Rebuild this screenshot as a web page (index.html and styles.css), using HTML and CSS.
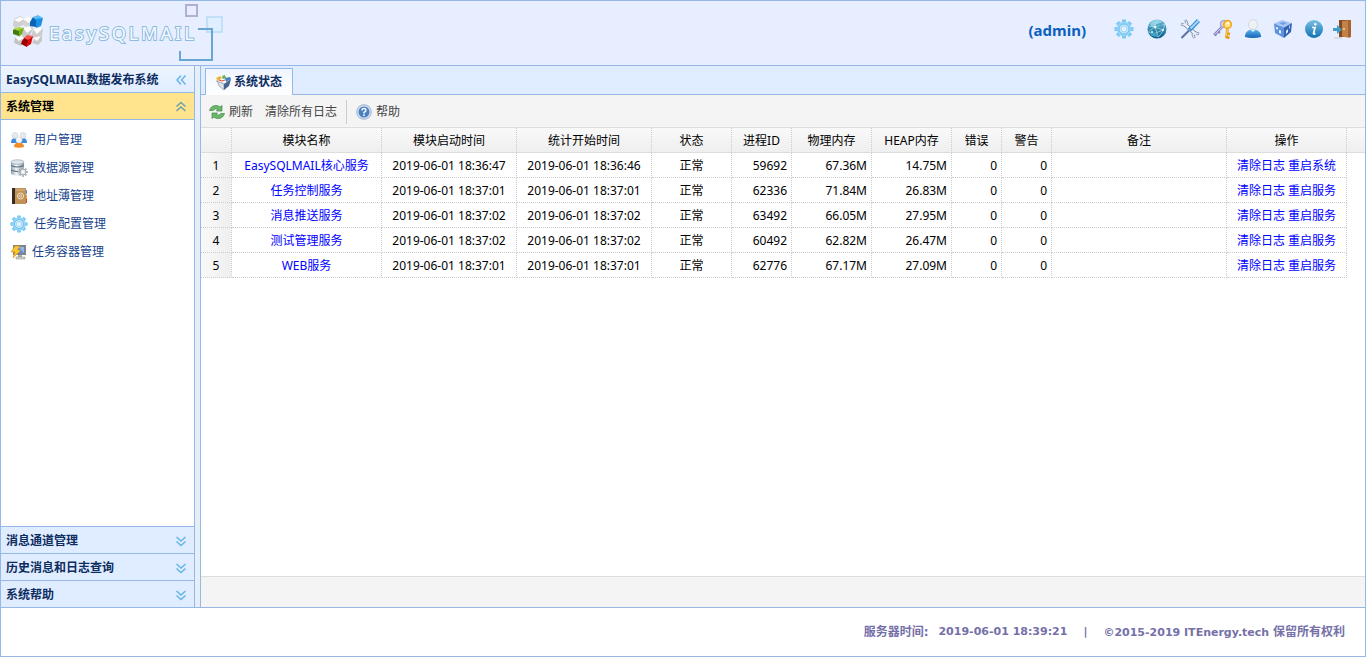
FILE: index.html
```html
<!DOCTYPE html>
<html lang="zh-CN">
<head>
<meta charset="utf-8">
<title>EasySQLMAIL数据发布系统</title>
<link rel="stylesheet" href="styles.css">
</head>
<body>
<svg class="defs" aria-hidden="true">
  <defs>
    <linearGradient id="blue" x1="0" y1="0" x2="0" y2="1"><stop offset="0" stop-color="#5fb6ee"/><stop offset="1" stop-color="#0f63b4"/></linearGradient>
    <linearGradient id="silver" x1="0" y1="0" x2="1" y2="0"><stop offset="0" stop-color="#8fa3b2"/><stop offset=".4" stop-color="#f2f5f7"/><stop offset="1" stop-color="#8c99a4"/></linearGradient>
    <linearGradient id="teal" x1="0" y1="0" x2="0" y2="1"><stop offset="0" stop-color="#6bbcd9"/><stop offset="1" stop-color="#0a5a84"/></linearGradient>
    <linearGradient id="info" x1="0" y1="0" x2="0" y2="1"><stop offset="0" stop-color="#79c0e4"/><stop offset="1" stop-color="#0f72b2"/></linearGradient>
    <symbol id="i-gear" viewBox="0 0 20 20">
      <path d="M10 .5v19M.5 10h19M3.300 3.300l13.400 13.400M16.700 3.300L3.300 16.700" stroke="#7cc9f3" stroke-width="4"/>
      <circle cx="10" cy="10" r="7.300" fill="#93d4f8"/>
      <circle cx="10" cy="10" r="5" fill="#c9ecfd" stroke="#6bbcec"/>
      <circle cx="10" cy="10" r="3" fill="#e2f1ff" stroke="#8fcdf1" stroke-width=".8"/>
    </symbol>
    <symbol id="i-chev-up" viewBox="0 0 12 12"><path d="M1.500 5.500L6 1.500l4.500 4M1.500 10L6 6l4.500 4" fill="none" stroke="currentColor" stroke-width="1.500"/></symbol>
    <symbol id="i-chev-down" viewBox="0 0 12 12"><path d="M1.500 2L6 6l4.500-4M1.500 6.500L6 10.500l4.500-4" fill="none" stroke="currentColor" stroke-width="1.500"/></symbol>
    <symbol id="i-chev-left" viewBox="0 0 12 12"><path d="M6 1.500L2 6l4 4.500M10.500 1.500L6.500 6l4 4.500" fill="none" stroke="currentColor" stroke-width="1.500"/></symbol>
  </defs>
</svg>

<header class="top">
  <svg class="logo" width="216" height="64" viewBox="0 0 216 64" role="img" aria-label="EasySQLMAIL">
    <path d="M4 18l6-3 5 3-2 6-8 3-2-3z" fill="#cfcfcf"/><path d="M4 19l6-3 4 2-5 3z" fill="#fff"/>
    <path d="M14 18l6-2 4 4-5 6-7-2z" fill="#d4d4d4"/><path d="M13 18l6-2 4 3-4 3z" fill="#fff"/>
    <path d="M13 27l6-3 4 3-3 8-7 1-2-4z" fill="#c9c9c9"/><path d="M13 27l6-2 3 3-5 4z" fill="#fff"/>
    <path d="M23 28l6-2 4 2-1 7-6 4-5-3z" fill="#cdcdcd"/><path d="M23 28l7-2 2 2-5 5z" fill="#fff"/>
    <path d="M5 36l6-1 4 2-4 8-7-3z" fill="#c4c4c4"/><path d="M5 36l6-1 3 2-5 3z" fill="#fff"/>
    <path d="M24 38l8-3v5l-4 4-6-2z" fill="#c8c8c8"/><path d="M23 37l8-2-4 5z" fill="#fff"/>
    <path d="M20 21l3-5 3 2v8l-6-1z" fill="#0864b5"/><path d="M23 16l5-2 5 3-7 2z" fill="#5dbcf5"/><path d="M26 18l7-1-2 8-5 2z" fill="#1b90e4"/>
    <path d="M3 29l3-2 4 2-1 6-6-2z" fill="#437c0c"/><path d="M3 28l6-2 5 1-5 3z" fill="#a9d640"/><path d="M9 29l5-2-2 6-3 3z" fill="#75b01f"/>
    <path d="M12 40l3-4 4 2-2 8-6-3z" fill="#990000"/><path d="M14 37l3-3 6 1-5 4z" fill="#f2554b"/><path d="M18 39l5-4-2 8-5 3z" fill="#dc0909"/>
    <text class="logo-text" x="39" y="39">EasySQLMAIL</text>
    <rect x="176" y="4" width="11" height="11" fill="none" stroke="#b4aed2" stroke-width="2"/>
    <rect x="197" y="16" width="15" height="15" fill="#e0efff" stroke="#c1dff6" stroke-width="2"/>
    <path d="M188 28h14v31h-32v-9" fill="none" stroke="#69a5d4" stroke-width="2"/>
  </svg>
  <div class="tools">
    <strong class="user">(admin)</strong>
    <div class="group wide">
      <button aria-label="设置"><svg width="20" height="20"><use href="#i-gear"/></svg></button>
      <button aria-label="网络"><svg width="20" height="20" viewBox="0 0 20 20"><circle cx="10" cy="10" r="9.500" fill="url(#teal)"/><path d="M3 5c3-5 9-5 12-2-3 3-6 1-7 4-3 2-4 0-5-2z" fill="#a9dfee" opacity=".7"/><path d="M1.500 13l6-5 9 3-5 7zM8 8l2-7M8 8L2 7M16 11l2-6-10 3M11 17L8 8M4 16l12-5" fill="none" stroke="#a5e2f2" stroke-width=".7"/><path d="M3 14q2 3 5 4l2-3-4-2zM12 4l4 1-3 2z" fill="#3fa3c8"/><circle cx="8" cy="8" r="1.200" fill="#e5fbff"/><circle cx="16" cy="11" r="1.100" fill="#e5fbff"/><circle cx="5" cy="13" r="1" fill="#e5fbff"/></svg></button>
      <button aria-label="工具"><svg width="20" height="20" viewBox="0 0 20 20"><path d="M4 4.500l12 11" stroke="#6f7fa8" stroke-width="4"/><path d="M1 5l4 1.500 2-2L5.500 1M19 15l-4-1.500-2 2 1.500 3.500" fill="none" stroke="#7c89ae" stroke-width="2.600"/><path d="M4 4.500l12 11" stroke="#eef2fa" stroke-width="2.400"/><path d="M1.300 5l3.700 1.500 2-2L5.700 1.400M18.700 15l-3.700-1.500-2 2 1.300 3.200" fill="none" stroke="#e4e9f5" stroke-width="1.200"/><path d="M9 11.500l-7.500 7.500" stroke="#5d6f96" stroke-width="2"/><path d="M18.500 1.500L9.500 11" stroke="#3f92d8" stroke-width="4.400"/><path d="M18.500 1.500L10.500 9.500" stroke="#a5d8fa" stroke-width="1.800"/></svg></button>
      <button aria-label="密钥"><svg width="20" height="20" viewBox="0 0 20 20"><path d="M9 8L2 15l1.500 1.500M5 12.500l2 1.500" fill="none" stroke="#9089c2" stroke-width="2.600"/><path d="M9 8L2 15" stroke="#cdc8ea"/><circle cx="11" cy="5" r="3.400" fill="#dedaf2" stroke="#a8a1d3" stroke-width="1.400"/><path d="M14.500 9l-1 9 3 1M14 14.500l3 .5" fill="none" stroke="#e79b16" stroke-width="2.600"/><path d="M14.500 9l-1 8" stroke="#ffd968"/><circle cx="14.500" cy="5.500" r="3.800" fill="#ffe48b" stroke="#f3ab23" stroke-width="1.800"/><circle cx="15" cy="4" r="1.200" fill="#fff"/></svg></button>
    </div>
    <div class="group">
      <button aria-label="用户"><svg width="20" height="20" viewBox="0 0 20 20"><path d="M2 18c0-5 3-7.500 8-7.500s8 2.500 8 7.500q-8 2-16 0z" fill="url(#blue)"/><path d="M7 10.500l3 2.500 3-2.500z" fill="#d9efff"/><ellipse cx="10" cy="5.500" rx="4.500" ry="5" fill="#eef0f2" stroke="#c3cbd3" stroke-width=".6"/></svg></button>
      <button aria-label="模块"><svg width="20" height="20" viewBox="0 0 20 20"><path d="M1 4.500l8-3.500 10 3-8 4.500z" fill="#a9c9f4"/><path d="M1 4.500l10 4V19L2 14z" fill="#5d93dc"/><path d="M19 4l-8 4.500V19l7-6z" fill="#3563b4"/><path d="M3 8l2 .5v2L3 10zM6 11l2 .5v3L6 14zM13 12l2-2v3l-2 2z" fill="#e5f1ff"/><path d="M6 4l4-1 4 1-4 2z" fill="#6f9fe0"/><path d="M16 7l1-1v3l-1 1z" fill="#a8ccfa"/></svg></button>
      <button aria-label="信息"><svg width="20" height="20" viewBox="0 0 20 20"><circle cx="11" cy="10" r="9" fill="url(#info)"/><circle cx="12.300" cy="5.300" r="1.300" fill="#fff"/><path d="M9 8.500h3l-1.500 6q0 1 2 0" fill="none" stroke="#fff" stroke-width="1.700"/></svg></button>
      <button aria-label="退出"><svg width="20" height="20" viewBox="0 0 20 20"><path d="M6 1h12v17H6z" fill="#7e4b22"/><path d="M9 2l8-1v18l-8-1.500z" fill="#c38146"/><path d="M15 1h3v17h-3z" fill="#a5642f"/><circle cx="11" cy="10" r="1" fill="#f4d58e"/><path d="M0 9h4V6l5 4.500L4 15v-3H0z" fill="#449cc6"/><path d="M1 19h8" stroke="#c3c5cb"/></svg></button>
    </div>
  </div>
</header>

<div class="middle">
  <nav class="side">
    <div class="bar title"><span>EasySQLMAIL数据发布系统</span><button aria-label="折叠"><svg width="12" height="12"><use href="#i-chev-left"/></svg></button></div>
    <button class="bar open"><span>系统管理</span><svg width="12" height="12"><use href="#i-chev-up"/></svg></button>
    <ul class="menu">
      <li><a href="#"><svg width="18" height="18" viewBox="0 0 18 18"><path d="M1 12q0-5 4-5t4 5zM9 12q0-5 4-5t4 5z" fill="#3d8cdc"/><circle cx="5" cy="4.500" r="3" fill="#e6eaef" stroke="#c8d0d8" stroke-width=".6"/><circle cx="13" cy="4.500" r="3" fill="#e6eaef" stroke="#c8d0d8" stroke-width=".6"/><path d="M4 16q0-4.500 5-4.500t5 4.500q-5 1.500-10 0z" fill="#f08a24"/><circle cx="9" cy="9" r="3" fill="#f6f7f8" stroke="#d5dade" stroke-width=".6"/></svg><span>用户管理</span></a></li>
      <li><a href="#"><svg width="18" height="18" viewBox="0 0 18 18"><path d="M1 3v12q6 3 13 0V3z" fill="url(#silver)"/><ellipse cx="7.500" cy="3" rx="6.500" ry="2.200" fill="#dfe7ed" stroke="#9aa9b5" stroke-width=".7"/><path d="M1 6.500q6 3 13 0M1 11q6 3 13 0" fill="none" stroke="#5d7587" stroke-width="1.200"/><path d="M13 8v10M8 13h10M9.500 9.500l7 7M16.500 9.500l-7 7" stroke="#b2b8be" stroke-width="1.800"/><circle cx="13" cy="13" r="3" fill="#e6e9ec" stroke="#a0a7ad"/><circle cx="13" cy="13" r="1.200" fill="#fff"/></svg><span>数据源管理</span></a></li>
      <li><a href="#"><svg width="18" height="18" viewBox="0 0 18 18"><path d="M2 1h4v16H2z" fill="#3a2c22"/><path d="M5 1h11v16H5z" fill="#c09258"/><path d="M6 2h9v2H6z" fill="#cda56d"/><path d="M16 3h1v4h-1z" fill="#4a9dd8"/><path d="M16 8h1v4h-1z" fill="#e9a126"/><path d="M16 12h1v4h-1z" fill="#d34431"/><circle cx="10.500" cy="9" r="3" fill="none" stroke="#f4e6cf"/><circle cx="10.500" cy="9" r="1.100" fill="none" stroke="#f4e6cf" stroke-width=".8"/></svg><span>地址薄管理</span></a></li>
      <li><a href="#"><svg width="18" height="18"><use href="#i-gear"/></svg><span>任务配置管理</span></a></li>
      <li><a href="#"><svg width="16" height="18" viewBox="0 0 16 18"><path d="M3 2h13v10H3z" fill="#7e8489"/><path d="M5 4h9v6H5z" fill="#5f8fdc"/><path d="M9 4h5v6z" fill="#93b5ef"/><path d="M8 12h4v2H8z" fill="#aaa"/><path d="M6 14h9v2H6z" fill="#d6d6d0" stroke="#85857d" stroke-width=".5"/><path d="M5 3h5L7.500 7H11l-8 8 2-6H1z" fill="#fbc72e" stroke="#d18d12" stroke-width=".6"/></svg><span>任务容器管理</span></a></li>
    </ul>
    <button class="bar"><span>消息通道管理</span><svg width="12" height="12"><use href="#i-chev-down"/></svg></button>
    <button class="bar"><span>历史消息和日志查询</span><svg width="12" height="12"><use href="#i-chev-down"/></svg></button>
    <button class="bar"><span>系统帮助</span><svg width="12" height="12"><use href="#i-chev-down"/></svg></button>
  </nav>

  <main class="main">
    <div class="tabs">
      <button class="tab"><svg width="17" height="18" viewBox="0 0 17 18"><path d="M1 8l5-3 10 1-6 5z" fill="#f7f9fb" stroke="#b3bdc9" stroke-width=".6"/><path d="M2 8l7 3v6l-5-4z" fill="#dde2ea" stroke="#7d8aa0" stroke-width=".6"/><path d="M16 6l-7 5v6l5-4z" fill="#4a648f"/><path d="M1 5l4-2 2 2-4 3z" fill="#f3b43c"/><path d="M7 3l3-1 1 3-3 1z" fill="#6db04e"/><path d="M10 5l5-1 1 2-5 3z" fill="#3c83ca"/><path d="M4 7l3 1 3-1" fill="none" stroke="#e2512e"/></svg><span>系统状态</span></button>
    </div>
    <div class="toolbar">
      <button><svg width="16" height="16" viewBox="0 0 16 16"><path d="M.5 6.500Q2 1.500 7 1.500q2.500 0 4 1.500l2-1.500V7H7.500L9 5.300Q6 4 4 6.500z" fill="#6cb76a" stroke="#3f8a47" stroke-width=".7"/><path d="M15.500 9.500Q14 14.500 9 14.500q-2.500 0-4-1.500l-2 1.500V9h5.500L7 10.700q3 1.300 5-1.200z" fill="#6cb76a" stroke="#3f8a47" stroke-width=".7"/></svg><span>刷新</span></button>
      <button><span>清除所有日志</span></button>
      <i class="sep"></i>
      <button><svg width="16" height="16" viewBox="0 0 16 16"><circle cx="8" cy="8" r="7.300" fill="#d3dfee" stroke="#8da7ca" stroke-width=".8"/><circle cx="8" cy="8" r="5.500" fill="#4a80c2"/><path d="M6 6.500q0-2 2-2t2 1.800Q10 7.500 8 8.500v1" fill="none" stroke="#fff" stroke-width="1.400"/><circle cx="8" cy="11.200" r=".9" fill="#fff"/></svg><span>帮助</span></button>
    </div>
    <div class="grid">
      <table>
        <colgroup><col class="w-31"><col class="w-150"><col class="w-135"><col class="w-135"><col class="w-80"><col class="w-60"><col class="w-80"><col class="w-80"><col class="w-50"><col class="w-50"><col class="w-175"><col class="w-120"><col></colgroup>
        <thead><tr><th></th><th>模块名称</th><th>模块启动时间</th><th>统计开始时间</th><th>状态</th><th>进程ID</th><th>物理内存</th><th>HEAP内存</th><th>错误</th><th>警告</th><th>备注</th><th>操作</th><th class="rest"></th></tr></thead>
        <tbody>
          <tr><td class="no">1</td><td><a href="#">EasySQLMAIL核心服务</a></td><td>2019-06-01 18:36:47</td><td>2019-06-01 18:36:46</td><td>正常</td><td class="num">59692</td><td class="num">67.36M</td><td class="num">14.75M</td><td class="num">0</td><td class="num">0</td><td></td><td><a href="#">清除日志</a> <a href="#">重启系统</a></td><td class="rest"></td></tr>
          <tr><td class="no">2</td><td><a href="#">任务控制服务</a></td><td>2019-06-01 18:37:01</td><td>2019-06-01 18:37:01</td><td>正常</td><td class="num">62336</td><td class="num">71.84M</td><td class="num">26.83M</td><td class="num">0</td><td class="num">0</td><td></td><td><a href="#">清除日志</a> <a href="#">重启服务</a></td><td class="rest"></td></tr>
          <tr><td class="no">3</td><td><a href="#">消息推送服务</a></td><td>2019-06-01 18:37:02</td><td>2019-06-01 18:37:02</td><td>正常</td><td class="num">63492</td><td class="num">66.05M</td><td class="num">27.95M</td><td class="num">0</td><td class="num">0</td><td></td><td><a href="#">清除日志</a> <a href="#">重启服务</a></td><td class="rest"></td></tr>
          <tr><td class="no">4</td><td><a href="#">测试管理服务</a></td><td>2019-06-01 18:37:02</td><td>2019-06-01 18:37:02</td><td>正常</td><td class="num">60492</td><td class="num">62.82M</td><td class="num">26.47M</td><td class="num">0</td><td class="num">0</td><td></td><td><a href="#">清除日志</a> <a href="#">重启服务</a></td><td class="rest"></td></tr>
          <tr><td class="no">5</td><td><a href="#">WEB服务</a></td><td>2019-06-01 18:37:01</td><td>2019-06-01 18:37:01</td><td>正常</td><td class="num">62776</td><td class="num">67.17M</td><td class="num">27.09M</td><td class="num">0</td><td class="num">0</td><td></td><td><a href="#">清除日志</a> <a href="#">重启服务</a></td><td class="rest"></td></tr>
        </tbody>
      </table>
    </div>
    <div class="status"></div>
  </main>
</div>

<footer class="foot">
  <span class="label">服务器时间:</span>
  <span class="time">2019-06-01 18:39:21</span>
  <span>|</span>
  <span>©2015-2019 ITEnergy.tech <span class="label">保留所有权利</span></span>
</footer>
</body>
</html>
```
FILE: styles.css
```css
* { box-sizing: border-box; }
body {
  margin: 0;
  min-height: 100vh;
  display: flex;
  flex-direction: column;
  border: 1px solid #95b8e7;
  background: #fff;
  color: #000;
  font: 12px/16px "Noto Sans", "Noto Sans CJK SC", sans-serif;
}
button { margin: 0; padding: 0; border: 0; background: none; font: inherit; color: inherit; cursor: pointer; }
a { text-decoration: none; }
svg { display: block; flex: none; }
.defs { position: absolute; width: 0; height: 0; }

.top {
  display: flex;
  justify-content: space-between;
  padding: 0 12px 0 9px;
  height: 65px;
  background: #e6eeff;
  border-bottom: 1px solid #95b8e7;
}
.logo-text {
  font: 18px "Noto Sans", sans-serif;
  letter-spacing: 3px;
  fill: #f4faff;
  stroke: #8dbade;
  stroke-width: 2px;
  paint-order: stroke;
}
.tools { display: flex; align-items: flex-start; padding-top: 18px; gap: 10px; }
.user { margin-right: 18px; line-height: 22px; font-size: 15px; color: #0b5fc0; }
.group { display: flex; gap: 10px; }
.group.wide { gap: 13px; }

.middle { flex: 1; display: flex; gap: 5px; background: #e6eef8; border-bottom: 1px solid #95b8e7; }
.side { width: 194px; flex: none; display: flex; flex-direction: column; background: #fff; border-right: 1px solid #95b8e7; }
.bar {
  display: flex;
  align-items: center;
  justify-content: space-between;
  height: 27px;
  padding: 2px 7px 0 5px;
  border-top: 1px solid #95b8e7;
  background: #e0ecff;
  color: #0e2d5f;
  font-weight: bold;
  text-align: left;
}
.bar svg { color: #63b5ea; }
.bar.title { height: 26px; border-top: 0; background: linear-gradient(#eff5ff, #e0ecff); }
.bar.open { height: 28px; background: #ffe48d; color: #000; border-bottom: 1px solid #95b8e7; }
.bar.open svg { color: #6f9fa8; }
.menu { flex: 1; margin: 0; padding: 6px 9px; list-style: none; }
.menu a { display: flex; align-items: center; gap: 6px; height: 28px; color: #15428b; }

.main { flex: 1; min-width: 0; display: flex; flex-direction: column; background: #fff; border-left: 1px solid #95b8e7; }
.tabs { height: 29px; padding: 2px 4px 0; background: #e0ecff; border-bottom: 1px solid #95b8e7; }
.tab {
  display: flex;
  align-items: center;
  gap: 2px;
  height: 27px;
  padding: 0 10px 0 9px;
  border: 1px solid #95b8e7;
  border-bottom: 0;
  background: linear-gradient(#eff5ff, #fff);
  color: #0e2d5f;
  font-weight: bold;
}
.toolbar { display: flex; align-items: center; gap: 12px; height: 33px; padding: 1px 8px 0; background: #f4f4f4; border-bottom: 1px solid #ddd; color: #444; }
.toolbar button { display: flex; align-items: center; gap: 4px; }
.sep { width: 1px; height: 24px; margin: 0 -3px; background: #ccc; }

.grid { flex: 1; }
table { width: 100%; table-layout: fixed; border-collapse: separate; border-spacing: 0; }
th, td { height: 25px; padding: 2px 4px 0; border: 0 dotted #ccc; border-width: 0 1px 1px 0; text-align: center; font-weight: normal; white-space: nowrap; }
th { background: linear-gradient(#f9f9f9, #efefef); border-bottom: 1px solid #ddd; }
.no { background: linear-gradient(to right, #f9f9f9, #efefef); }
.num { text-align: right; }
td a { color: #00f; }
.rest { border-right: 0; }
td.rest { border: 0; }
.w-31 { width: 31px; } .w-50 { width: 50px; } .w-60 { width: 60px; } .w-80 { width: 80px; }
.w-120 { width: 120px; } .w-135 { width: 135px; } .w-150 { width: 150px; } .w-175 { width: 175px; }
.status { height: 31px; background: #f4f4f4; border-top: 1px solid #ddd; }

.foot {
  display: flex;
  align-items: center;
  justify-content: flex-end;
  height: 48px;
  padding: 0 20px;
  gap: 16px;
  color: #7570a8;
  font: bold 11px/16px "DejaVu Sans", "Noto Sans CJK SC", sans-serif;
}
.foot .label { font-size: 12px; }
.foot .time { margin-left: -6px; }
```
